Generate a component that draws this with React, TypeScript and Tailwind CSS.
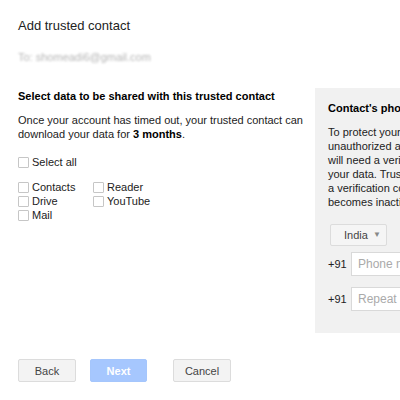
export default function App() {
  const font = { fontFamily: '"Liberation Sans", Arial, sans-serif' }
  const box = 'w-[11px] h-[11px] border border-[#c6c6c6] bg-white rounded-[1px] shrink-0'

  const Check = ({ label }: { label: string }) => (
    <label className="flex items-center gap-[3px] h-[14px] leading-[14px]">
      <span className={box} />
      <span>{label}</span>
    </label>
  )

  return (
    <div className="w-[400px] h-[400px] overflow-hidden bg-white text-[#222] text-[11px] leading-[14px]" style={font}>
      <div className="pl-[18px] pt-[18px]">
        {/* Header */}
        <h1 className="text-[13px] leading-[16px] text-[#222]">Add trusted contact</h1>
        <p className="mt-[16px] text-[#b5b5b5] blur-[1px]">To: shomeadi6@gmail.com</p>

        {/* Body */}
        <div className="mt-[24px] flex">
          <div className="w-[297px] shrink-0 pt-[1px]">
            <h2 className="font-bold text-black">Select data to be shared with this trusted contact</h2>
            <p className="mt-[10px] pr-[8px]">
              Once your account has timed out, your trusted contact can download your data for{' '}
              <b className="text-black">3 months</b>.
            </p>
            <div className="mt-[14px]">
              <Check label="Select all" />
            </div>
            <div className="mt-[11px] grid grid-cols-[75px_auto] w-fit">
              <Check label="Contacts" />
              <Check label="Reader" />
              <Check label="Drive" />
              <Check label="YouTube" />
              <Check label="Mail" />
            </div>
          </div>

          {/* Phone panel */}
          <div className="bg-[#f1f1f1] w-[220px] shrink-0 pt-[13px] px-[13px] pb-[22px]">
            <h2 className="font-bold text-black whitespace-nowrap">Contact's phone number</h2>
            <p className="mt-[10px] whitespace-nowrap">
              To protect your data from<br />
              unauthorized access, your contact<br />
              will need a verification code to download<br />
              your data. Trusted contacts will receive<br />
              a verification code when your account<br />
              becomes inactive.
            </p>
            <div className="mt-[15px] ml-[2px] w-[57px] h-[22px] border border-[#dcdcdc] bg-[#f5f5f5] rounded-[2px] flex items-center justify-between pl-[13px] pr-[5px] text-[#444]">
              <span>India</span>
              <span className="text-[8px] text-[#888]">▼</span>
            </div>
            <div className="mt-[6px] flex items-center">
              <span className="w-[23px]">+91</span>
              <div className="h-[24px] w-[160px] bg-white border border-[#d9d9d9] flex items-center px-[6px] text-[12px] text-[#aaa] whitespace-nowrap">
                Phone number
              </div>
            </div>
            <div className="mt-[11px] flex items-center">
              <span className="w-[23px]">+91</span>
              <div className="h-[24px] w-[160px] bg-white border border-[#d9d9d9] flex items-center px-[6px] text-[12px] text-[#aaa] whitespace-nowrap">
                Repeat phone number
              </div>
            </div>
          </div>
        </div>

        {/* Footer */}
        <div className="mt-[26px] flex items-center">
          <button className="w-[58px] h-[23px] border border-[#dcdcdc] bg-[#f3f3f3] rounded-[2px] text-[#444] text-[11px]">
            Back
          </button>
          <button className="ml-[14px] w-[57px] h-[23px] border border-[#a5c6fc] bg-[#a6c7fe] rounded-[2px] text-white font-bold text-[11px]">
            Next
          </button>
          <button className="ml-[26px] w-[58px] h-[23px] border border-[#dcdcdc] bg-[#f3f3f3] rounded-[2px] text-[#444] text-[11px]">
            Cancel
          </button>
        </div>
      </div>
    </div>
  )
}
